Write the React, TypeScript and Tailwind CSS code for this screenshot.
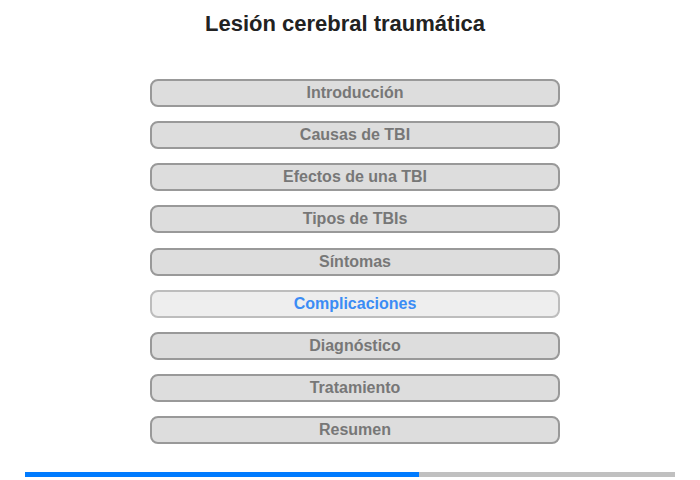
import React from 'react';

const sections = [
  'Introducción',
  'Causas de TBI',
  'Efectos de una TBI',
  'Tipos de TBIs',
  'Síntomas',
  'Complicaciones',
  'Diagnóstico',
  'Tratamiento',
  'Resumen',
];

const ACTIVE = 'Complicaciones';

const App: React.FC = () => {
  return (
    <div
      className="w-[700px] h-[480px] bg-white flex flex-col"
      style={{ fontFamily: '"Liberation Sans", Arial, sans-serif' }}
    >
      <h1 className="mt-[11px] pr-[10px] text-center text-[22px] leading-[26px] font-bold text-[#222]">
        Lesión cerebral traumática
      </h1>

      <ul className="mt-[42px] ml-[150px] w-[410px] flex flex-col gap-[14.125px]">
        {sections.map((s) => (
          <li key={s}>
            <button
              className={`w-full h-[28px] rounded-[8px] border-2 text-[16px] font-bold leading-none flex items-center justify-center ${
                s === ACTIVE
                  ? 'bg-[#eeeeee] border-[#bdbdbd] text-[#3b8cf5]'
                  : 'bg-[#dddddd] border-[#999999] text-[#777777]'
              }`}
            >
              {s}
            </button>
          </li>
        ))}
      </ul>

      {/* progress */}
      <div className="mt-auto mb-[3px] ml-[25px] w-[650px] h-[5px] bg-[#c0c0c0] flex">
        <div className="w-[394px] h-full bg-[#007bff]" />
      </div>
    </div>
  );
};

export default App;
